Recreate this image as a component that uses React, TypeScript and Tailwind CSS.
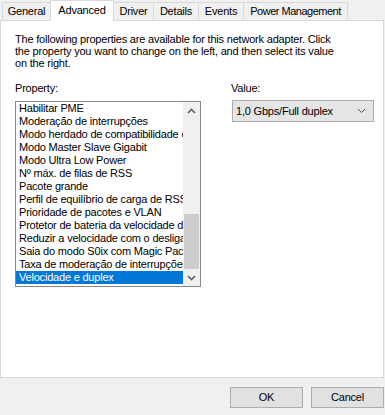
import React from "react";

const items = [
  "Habilitar PME",
  "Moderação de interrupções",
  "Modo herdado de compatibilidade com switch",
  "Modo Master Slave Gigabit",
  "Modo Ultra Low Power",
  "Nº máx. de filas de RSS",
  "Pacote grande",
  "Perfil de equilíbrio de carga de RSS",
  "Prioridade de pacotes e VLAN",
  "Protetor de bateria da velocidade de conexão",
  "Reduzir a velocidade com o desligamento",
  "Saia do modo S0ix com Magic Packet",
  "Taxa de moderação de interrupções",
  "Velocidade e duplex",
];

function ChevronUp() {
  return (
    <svg width="9" height="6" viewBox="0 0 9 6">
      <path d="M1 5 L4.5 1.5 L8 5" fill="none" stroke="#606060" strokeWidth="1.6" />
    </svg>
  );
}

function ChevronDown({ color = "#606060", w = 1.6 }: { color?: string; w?: number }) {
  return (
    <svg width="9" height="6" viewBox="0 0 9 6">
      <path d="M1 1 L4.5 4.5 L8 1" fill="none" stroke={color} strokeWidth={w} />
    </svg>
  );
}

export default function App() {
  return (
    <div className="w-[385px] h-[415px] bg-[#f0f0f0] font-['Liberation_Sans',Arial,sans-serif] text-[11px] tracking-[-0.2px] text-black overflow-hidden">
      {/* Tabs */}
      <div className="flex items-end h-[20px] pl-[2px]">
        <div className="w-[49px] h-[18px] border-t border-l border-r border-[#d9d9d9] bg-[#f0f0f0] flex items-center justify-center">General</div>
        <div className="relative z-10 -ml-[1px] -mb-[1px] w-[64px] h-[21px] border-t border-l border-r border-[#d9d9d9] bg-white flex items-center justify-center pb-[1px]">Advanced</div>
        <div className="-ml-[1px] w-[41px] h-[18px] border-t border-l border-r border-[#d9d9d9] bg-[#f0f0f0] flex items-center justify-center">Driver</div>
        <div className="-ml-[1px] w-[46px] h-[18px] border-t border-l border-r border-[#d9d9d9] bg-[#f0f0f0] flex items-center justify-center">Details</div>
        <div className="-ml-[1px] w-[46px] h-[18px] border-t border-l border-r border-[#d9d9d9] bg-[#f0f0f0] flex items-center justify-center">Events</div>
        <div className="-ml-[1px] w-[105px] h-[18px] border-t border-l border-r border-[#d9d9d9] bg-[#f0f0f0] flex items-center justify-center tracking-[-0.5px]">Power Management</div>
      </div>

      {/* Panel */}
      <div className="w-[384px] h-[358px] border border-[#d9d9d9] bg-white pl-[14px] pt-[12px]">
        <p className="leading-[12px] whitespace-nowrap">
          The following properties are available for this network adapter. Click
          <br />
          the property you want to change on the left, and then select its value
          <br />
          on the right.
        </p>

        <div className="flex mt-[13px]">
          {/* Property column */}
          <div className="flex flex-col w-[186px]">
            <div className="leading-[13px]">Property:</div>
            <div className="mt-[6px] w-[186px] h-[186px] border border-[#828790] bg-white flex">
              <div className="flex-1 overflow-hidden">
                {items.map((it, i) =>
                  i === items.length - 1 ? (
                    <div key={it} className="h-[13px] leading-[13px] pl-[3px] whitespace-nowrap bg-[#0078d7] text-white">
                      {it}
                    </div>
                  ) : (
                    <div key={it} className="h-[13px] leading-[13px] pl-[3px] whitespace-nowrap">
                      {it}
                    </div>
                  )
                )}
              </div>
              <div className="w-[17px] bg-[#f0f0f0] flex flex-col">
                <div className="h-[17px] flex items-center justify-center">
                  <ChevronUp />
                </div>
                <div className="flex-1 flex flex-col justify-end px-[1px]">
                  <div className="h-[55px] bg-[#cdcdcd]" />
                </div>
                <div className="h-[17px] flex items-center justify-center">
                  <ChevronDown />
                </div>
              </div>
            </div>
          </div>

          {/* Value column */}
          <div className="flex flex-col ml-[30px]">
            <div className="leading-[13px]">Value:</div>
            <div className="mt-[5px] ml-[1px] w-[142px] h-[22px] border border-[#adadad] bg-[#e5e5e5] flex items-center justify-between pl-[3px] pr-[7px]">
              <span className="whitespace-nowrap">1,0 Gbps/Full duplex</span>
              <ChevronDown color="#505050" w={1} />
            </div>
          </div>
        </div>
      </div>

      {/* Buttons */}
      <div className="flex justify-end gap-[8px] pt-[9px] pr-[1px]">
        <button className="w-[73px] h-[21px] border border-[#adadad] bg-[#e1e1e1] flex items-center justify-center">OK</button>
        <button className="w-[73px] h-[21px] border border-[#adadad] bg-[#e1e1e1] flex items-center justify-center">Cancel</button>
      </div>
    </div>
  );
}
